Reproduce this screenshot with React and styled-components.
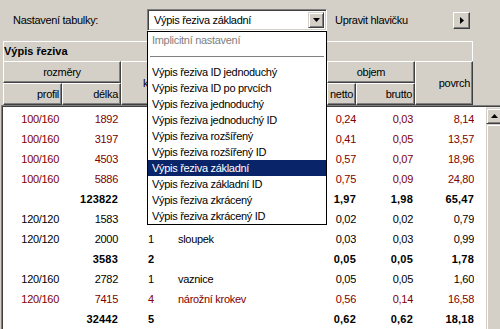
import React from 'react'
import styled, { createGlobalStyle, css } from 'styled-components'

const GlobalStyle = createGlobalStyle`
  html, body {
    margin: 0;
    padding: 0;
    background: #d4d0c8;
  }
  body {
    font-family: "Liberation Sans", Arial, sans-serif;
    font-size: 11px;
    letter-spacing: -0.3px;
    color: #000;
  }
`

const raised = css`
  border-top: 1px solid #fff;
  border-left: 1px solid #fff;
  border-right: 1px solid #404040;
  border-bottom: 1px solid #404040;
  box-shadow: inset -1px -1px 0 #808080;
`

// kusy / název of the first rows sit under the open list, so they stay empty
const rows = [
  { p: '100/160', d: '1892', ne: '0,24', b: '0,03', po: '8,14', red: true },
  { p: '100/160', d: '3197', ne: '0,41', b: '0,05', po: '13,57', red: true },
  { p: '100/160', d: '4503', ne: '0,57', b: '0,07', po: '18,96', red: true },
  { p: '100/160', d: '5886', ne: '0,75', b: '0,09', po: '24,80', red: true },
  { p: '', d: '123822', ne: '1,97', b: '1,98', po: '65,47', bold: true },
  { p: '120/120', d: '1583', ne: '0,02', b: '0,02', po: '0,79' },
  { p: '120/120', d: '2000', k: '1', n: 'sloupek', ne: '0,03', b: '0,03', po: '0,99' },
  { p: '', d: '3583', k: '2', ne: '0,05', b: '0,05', po: '1,78', bold: true },
  { p: '120/160', d: '2782', k: '1', n: 'vaznice', ne: '0,05', b: '0,05', po: '1,60' },
  { p: '120/160', d: '7415', k: '4', n: 'nárožní krokev', ne: '0,56', b: '0,14', po: '16,58', red: true },
  { p: '', d: '32442', k: '5', ne: '0,62', b: '0,62', po: '18,18', bold: true },
]

const options = [
  'Výpis řeziva ID jednoduchý',
  'Výpis řeziva ID po prvcích',
  'Výpis řeziva jednoduchý',
  'Výpis řeziva jednoduchý ID',
  'Výpis řeziva rozšířený',
  'Výpis řeziva rozšířený ID',
  'Výpis řeziva základní',
  'Výpis řeziva základní ID',
  'Výpis řeziva zkrácený',
  'Výpis řeziva zkrácený ID',
]

const COLS = '59px 59px 50px 156px 29px 59px 58px'
const BODY_COLS = '59px 59px 50px 156px 29px 59px 59px'

function App() {
  return (
    <Screen>
      <GlobalStyle />
      <Toolbar>
        <Label>Nastavení tabulky:</Label>
        <Combo>
          <ComboText>Výpis řeziva základní</ComboText>
          <ArrowBtn>
            <svg width="7" height="4" viewBox="0 0 7 4"><path d="M0 0h7L3.5 4z" fill="#000" /></svg>
          </ArrowBtn>
        </Combo>
        <Label $plain>Upravit hlavičku</Label>
        <SmallBtn>
          <svg width="4" height="7" viewBox="0 0 4 7"><path d="M0 0v7l4-3.5z" fill="#000" /></svg>
        </SmallBtn>
      </Toolbar>

      <Section>
        <TitleBar>Výpis řeziva</TitleBar>
        <HeaderGrid>
          <HeadCell $col="1 / 3" $row="1" $align="center">rozměry</HeadCell>
          <HeadCell $col="1" $row="2">profil</HeadCell>
          <HeadCell $col="2" $row="2">délka</HeadCell>
          <HeadCell $col="3" $row="1 / 3" $align="left" $pl="21px">k</HeadCell>
          <HeadCell $col="4" $row="1 / 3" $align="center" />
          <HeadCell $col="5 / 7" $row="1" $align="center">objem</HeadCell>
          <HeadCell $col="5" $row="2" $align="left">netto</HeadCell>
          <HeadCell $col="6" $row="2">brutto</HeadCell>
          <HeadCell $col="7" $row="1 / 3">povrch</HeadCell>
        </HeaderGrid>
      </Section>

      <BodyPanel>
        <List>
          {rows.map((r, i) => (
            <Row key={i} $red={r.red} $bold={r.bold}>
              <Cell $pr="3px">{r.p}</Cell>
              <Cell $pr="3px">{r.d}</Cell>
              <Cell $align="left" $pl="27px">{r.k}</Cell>
              <Cell $align="left" $pl="7px">{r.n}</Cell>
              <Cell>{r.ne}</Cell>
              <Cell $pr="2px">{r.b}</Cell>
              <Cell>{r.po}</Cell>
            </Row>
          ))}
        </List>
        <Scrollbar>
          <ScrollBtn>
            <svg width="7" height="4" viewBox="0 0 7 4"><path d="M0 4h7L3.5 0z" fill="#000" /></svg>
          </ScrollBtn>
          <Thumb />
        </Scrollbar>
      </BodyPanel>

      <Dropdown>
        <Option $muted>Implicitní nastavení</Option>
        <Separator />
        {options.map((o) => (
          <Option key={o} $selected={o === 'Výpis řeziva základní'}>{o}</Option>
        ))}
      </Dropdown>
    </Screen>
  )
}

export default App

const Screen = styled.div`
  position: relative;
  width: 500px;
  height: 329px;
  overflow: hidden;
  background: #d4d0c8;
`

const Toolbar = styled.div`
  display: flex;
  align-items: flex-start;
  height: 41px;
  box-sizing: border-box;
  padding-top: 9px;
`

const Label = styled.div`
  ${(p) => (p.$plain ? 'margin-left: 8px;' : 'width: 134px; padding-left: 13px;')}
  line-height: 22px;
  white-space: nowrap;
`

const Combo = styled.div`
  display: flex;
  align-items: center;
  width: 180px;
  height: 22px;
  box-sizing: border-box;
  background: #fff;
  border-top: 1px solid #808080;
  border-left: 1px solid #808080;
  border-right: 1px solid #fff;
  border-bottom: 1px solid #fff;
  box-shadow: inset 1px 1px 0 #404040, inset -1px -1px 0 #d4d0c8;
  padding: 2px;
`

const ComboText = styled.div`
  flex: 1;
  padding-left: 4px;
  line-height: 16px;
`

const ArrowBtn = styled.div`
  width: 16px;
  height: 16px;
  box-sizing: border-box;
  display: flex;
  align-items: center;
  justify-content: center;
  background: #d4d0c8;
  border-top: 1px solid #d4d0c8;
  border-left: 1px solid #d4d0c8;
  border-right: 1px solid #404040;
  border-bottom: 1px solid #404040;
  box-shadow: inset 1px 1px 0 #fff, inset -1px -1px 0 #808080;
`

const SmallBtn = styled.div`
  margin-left: auto;
  margin-right: 30px;
  margin-top: 3px;
  width: 17px;
  height: 17px;
  box-sizing: border-box;
  display: flex;
  align-items: center;
  justify-content: center;
  ${raised}
`

const Section = styled.div`
  padding-left: 3px;
  width: 470px;
`

const TitleBar = styled.div`
  height: 20px;
  box-sizing: border-box;
  border-top: 1px solid #fff;
  border-left: 1px solid #fff;
  border-right: 1px solid #fff;
  font-weight: bold;
  letter-spacing: 0;
  line-height: 18px;
`

const HeaderGrid = styled.div`
  display: grid;
  grid-template-columns: ${COLS};
  grid-template-rows: 22px 22px;
`

const HeadCell = styled.div`
  grid-column: ${(p) => p.$col};
  grid-row: ${(p) => p.$row};
  display: flex;
  align-items: center;
  justify-content: ${(p) => (p.$align === 'center' ? 'center' : p.$align === 'left' ? 'flex-start' : 'flex-end')};
  box-sizing: border-box;
  padding: 0 2px 0 ${(p) => p.$pl || '2px'};
  white-space: nowrap;
  overflow: hidden;
  ${raised}
`

const BodyPanel = styled.div`
  display: flex;
  margin-left: 1px;
  width: 501px;
  height: 226px;
  box-sizing: border-box;
  border-top: 1px solid #808080;
  border-left: 1px solid #808080;
  box-shadow: inset 1px 1px 0 #404040;
  padding: 1px 0 0 1px;
`

const List = styled.div`
  flex: 1;
  background: #fff;
  padding-top: 2px;
`

const Row = styled.div`
  display: grid;
  grid-template-columns: ${BODY_COLS};
  height: 20px;
  align-items: center;
  color: ${(p) => (p.$red ? '#800000' : '#000')};
  font-weight: ${(p) => (p.$bold ? 'bold' : 'normal')};
  letter-spacing: ${(p) => (p.$bold ? '0.2px' : '-0.3px')};
`

const Cell = styled.div`
  text-align: ${(p) => p.$align || 'right'};
  padding-right: ${(p) => p.$pr || '0'};
  padding-left: ${(p) => p.$pl || '0'};
  white-space: nowrap;
  overflow: hidden;
`

const Scrollbar = styled.div`
  width: 16px;
  display: flex;
  flex-direction: column;
  background: #ebe9e4;
  padding-top: 1px;
`

const ScrollBtn = styled.div`
  height: 16px;
  box-sizing: border-box;
  display: flex;
  align-items: center;
  justify-content: center;
  background: #d4d0c8;
  border-top: 1px solid #d4d0c8;
  border-left: 1px solid #d4d0c8;
  border-right: 1px solid #404040;
  border-bottom: 1px solid #404040;
  box-shadow: inset 1px 1px 0 #fff, inset -1px -1px 0 #808080;
`

const Thumb = styled.div`
  flex: 1;
  background: #d4d0c8;
  border-top: 1px solid #d4d0c8;
  border-left: 1px solid #d4d0c8;
  box-shadow: inset 1px 1px 0 #fff;
`

const Dropdown = styled.div`
  position: absolute;
  left: 147px;
  top: 31px;
  width: 180px;
  box-sizing: border-box;
  background: #fff;
  border: 1px solid #000;
`

const Option = styled.div`
  height: 16px;
  line-height: 16px;
  padding-left: 4px;
  white-space: nowrap;
  color: ${(p) => (p.$muted ? '#808080' : p.$selected ? '#fff' : '#000')};
  background: ${(p) => (p.$selected ? '#0a246a' : 'transparent')};
`

const Separator = styled.div`
  height: 16px;
  display: flex;
  align-items: center;
  padding: 0 2px 0 2px;
  &::after {
    content: '';
    flex: 1;
    height: 1px;
    background: #808080;
  }
`
